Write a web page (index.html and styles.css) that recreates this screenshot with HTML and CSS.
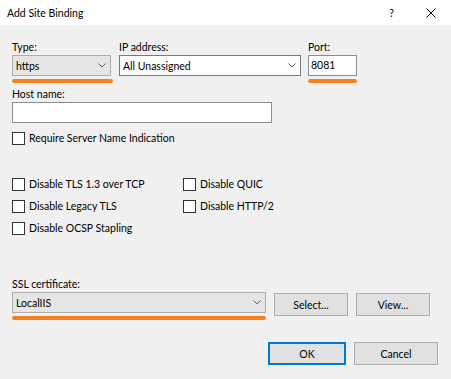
FILE: index.html
```html
<!DOCTYPE html>
<html lang="en">
<head>
    <meta charset="UTF-8">
    <title>Add Site Binding</title>
    <link rel="stylesheet" href="styles.css">
</head>
<body>
    <div class="titlebar">
        <span class="title">Add Site Binding</span>
        <span class="help">?</span>
        <svg class="close" width="10" height="10" viewBox="0 0 10 10">
            <path d="M0.5 0.5 L9.5 9.5 M9.5 0.5 L0.5 9.5" stroke="#000" stroke-width="1" fill="none"/>
        </svg>
    </div>

    <div class="content">
        <div class="top">
            <div class="field type">
                <label>Type:</label>
                <div class="combo">
                    <span>https</span>
                    <svg width="8" height="5" viewBox="0 0 8 5"><polyline points="0.5,0.5 4,4 7.5,0.5" fill="none" stroke="#606060"/></svg>
                </div>
                <div class="mark"></div>
            </div>
            <div class="field ip">
                <label>IP address:</label>
                <div class="combo edit">
                    <span>All Unassigned</span>
                    <svg width="8" height="5" viewBox="0 0 8 5"><polyline points="0.5,0.5 4,4 7.5,0.5" fill="none" stroke="#606060"/></svg>
                </div>
            </div>
            <div class="field port">
                <label>Port:</label>
                <div class="textbox">8081</div>
                <div class="mark"></div>
            </div>
        </div>

        <div class="field host">
            <label>Host name:</label>
            <div class="textbox"></div>
        </div>

        <div class="check sni"><span class="box"></span>Require Server Name Indication</div>

        <div class="options">
            <div class="check"><span class="box"></span>Disable TLS 1.3 over TCP</div>
            <div class="check"><span class="box"></span>Disable QUIC</div>
            <div class="check"><span class="box"></span>Disable Legacy TLS</div>
            <div class="check"><span class="box"></span>Disable HTTP/2</div>
            <div class="check"><span class="box"></span>Disable OCSP Stapling</div>
        </div>

        <div class="ssl">
            <label>SSL certificate:</label>
            <div class="ssl-row">
                <div class="ssl-pick">
                    <div class="combo">
                        <span>LocalIIS</span>
                        <svg width="8" height="5" viewBox="0 0 8 5"><polyline points="0.5,0.5 4,4 7.5,0.5" fill="none" stroke="#606060"/></svg>
                    </div>
                    <div class="mark"></div>
                </div>
                <button class="btn side">Select...</button>
                <button class="btn side">View...</button>
            </div>
        </div>

        <div class="footer">
            <button class="btn ok">OK</button>
            <button class="btn cancel">Cancel</button>
        </div>
    </div>
</body>
</html>
```

FILE: styles.css
```css
* {
    margin: 0;
    padding: 0;
    box-sizing: border-box;
}

body {
    font-family: Lato, 'Noto Sans', sans-serif;
    font-size: 10.5px;
    color: #000;
    background: #f0f0f0;
    width: 451px;
    height: 379px;
    overflow: hidden;
}

.titlebar {
    height: 25px;
    background: #fff;
    display: flex;
    align-items: center;
    padding: 0 15px 0 7px;
}

.title {
    flex: 1;
}

.help {
    margin-right: 32px;
}

.content {
    padding: 14px 13px 0 12px;
}

label {
    display: block;
    height: 16px;
    line-height: 16px;
}

.top {
    display: flex;
    align-items: flex-start;
}

.type {
    width: 99px;
}

.ip {
    width: 182px;
    margin-left: 8px;
}

.port {
    width: 49px;
    margin-left: 7px;
}

.combo {
    height: 21px;
    display: flex;
    align-items: center;
    justify-content: space-between;
    padding: 0 4px 0 3px;
    border: 1px solid #adadad;
    background: #e5e5e5;
}

.combo.edit {
    background: #fff;
    border-color: #7a7a7a;
}

.textbox {
    height: 21px;
    line-height: 19px;
    padding: 0 2px;
    background: #fff;
    border: 1px solid #8c8c8c;
}

.mark {
    height: 4px;
    margin-top: 3px;
    background: #f7801e;
    border-radius: 2px;
}

.type .mark {
    width: 101px;
}

.host {
    margin-top: 3px;
    width: 260px;
}

.check {
    display: flex;
    align-items: center;
    gap: 4px;
    height: 16px;
}

.box {
    width: 13px;
    height: 13px;
    background: #fff;
    border: 1px solid #333;
}

.sni {
    margin-top: 7px;
}

.options {
    display: grid;
    grid-template-columns: 171px auto;
    row-gap: 6px;
    margin-top: 30px;
}

.ssl {
    margin-top: 40px;
}

.ssl-row {
    display: flex;
    align-items: flex-start;
}

.ssl-pick {
    width: 254px;
}

.btn {
    font: inherit;
    color: #000;
    background: #e1e1e1;
    border: 1px solid #adadad;
    height: 23px;
}

.side {
    width: 74px;
    margin: 1px 0 0 8px;
}

.footer {
    display: flex;
    justify-content: flex-end;
    gap: 8px;
    margin-top: 22px;
}

.ok {
    width: 78px;
    border: 2px solid #0078d7;
}

.cancel {
    width: 84px;
}
```
